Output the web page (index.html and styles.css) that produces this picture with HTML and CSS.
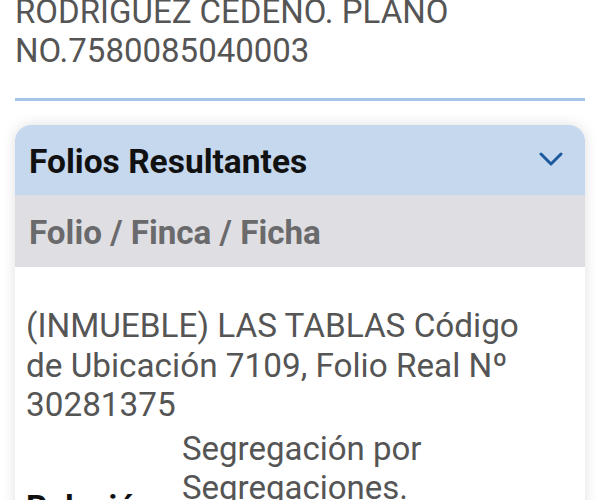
FILE: index.html
```html
<!DOCTYPE html>
<html lang="es">
<head>
    <meta charset="UTF-8">
    <meta name="viewport" content="width=device-width, initial-scale=1.0">
    <title>Folios Resultantes</title>
    <link rel="stylesheet" href="styles.css">
</head>
<body>
    <div class="page">
        <p class="plan-text">RODRIGUEZ CEDENO. PLANO NO.7580085040003</p>
        <hr class="divider">

        <div class="panel">
            <div class="panel-header">
                <span class="panel-title">Folios Resultantes</span>
                <svg class="chevron" width="24" height="16" viewBox="0 0 24 16">
                    <polyline points="2,3 12,13 22,3" fill="none" stroke="#1b5a9e" stroke-width="3" stroke-linecap="round" stroke-linejoin="round"/>
                </svg>
            </div>
            <div class="panel-subheader">Folio / Finca / Ficha</div>
            <div class="panel-body">
                <p class="folio-desc">(INMUEBLE) LAS TABLAS Código de Ubicación 7109, Folio Real Nº 30281375</p>
                <div class="field-row">
                    <span class="field-label">Relación</span>
                    <span class="field-value">Segregación por Segregaciones. Resultante de la finca madre inscrita</span>
                </div>
            </div>
        </div>
    </div>
</body>
</html>
```

FILE: styles.css
```css
body, html {
    margin: 0;
    padding: 0;
    background: #fff;
    font-family: Roboto, "Liberation Sans", sans-serif;
    overflow: hidden;
}
.page {
    padding: 0 15px;
}
.plan-text {
    margin: -8px 0 0 0;
    font-size: 33px;
    line-height: 39px;
    color: #555;
}
.divider {
    border: none;
    height: 3px;
    background-color: #a4c4e8;
    margin: 28px 0 0 0;
}
.panel {
    margin-top: 24px;
    border-radius: 16px;
    overflow: hidden;
    background: #fff;
    box-shadow: 0 0 14px rgba(0, 0, 0, 0.13);
}
.panel-header {
    display: flex;
    align-items: center;
    justify-content: space-between;
    background-color: #c5d8ee;
    padding: 17px 22px 13px 14px;
    height: 40px;
}
.panel-title {
    font-size: 33.5px;
    line-height: 40px;
    font-weight: 700;
    color: #111;
}
.chevron {
    margin-top: -6px;
}
.panel-subheader {
    background-color: #dfdfe3;
    padding: 18px 14px 14px 14px;
    font-size: 33.2px;
    line-height: 40px;
    font-weight: 700;
    color: #6a6a6c;
}
.panel-body {
    padding: 39px 30px 20px 11px;
}
.folio-desc {
    margin: 0;
    font-size: 33.3px;
    line-height: 39.5px;
    color: #555;
}
.field-row {
    display: grid;
    grid-template-columns: 156px 1fr;
    align-items: center;
    margin-top: 4px;
}
.field-label {
    font-size: 33px;
    line-height: 39.5px;
    font-weight: 700;
    color: #111;
}
.field-value {
    font-size: 33px;
    line-height: 39.5px;
    color: #555;
}
```
